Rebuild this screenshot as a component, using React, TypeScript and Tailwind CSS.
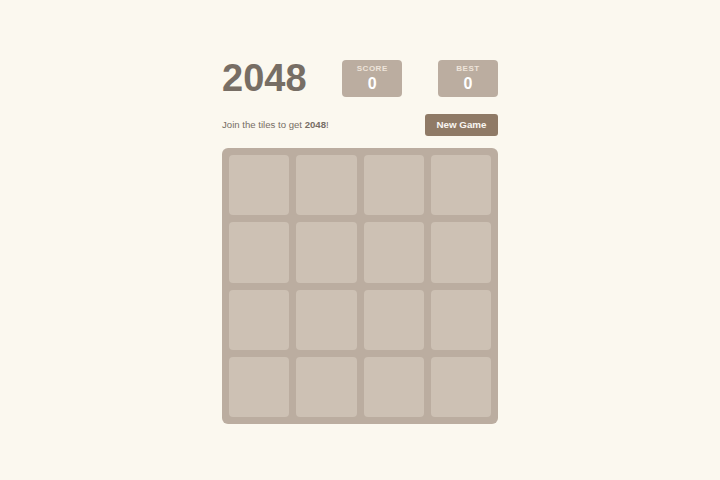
const SIZE = 4;

function ScoreBox({ label, value }: { label: string; value: number }) {
  return (
    <div className="flex h-[37px] w-[60px] flex-col items-center justify-center rounded-[4px] bg-[#bbada0]">
      <span className="text-[8px] font-bold uppercase leading-none tracking-[0.5px] text-[#eee4da]">
        {label}
      </span>
      <span className="mt-[3px] text-[16px] font-bold leading-none text-white">
        {value}
      </span>
    </div>
  );
}

export default function App() {
  const cells = Array.from({ length: SIZE * SIZE }, (_, i) => i);

  return (
    <div
      className="flex min-h-screen justify-center bg-[#fbf8ef] pt-[59px]"
      style={{ fontFamily: '"Liberation Sans", Arial, sans-serif' }}
    >
      <div className="w-[276px]">
        <div className="flex items-center justify-between">
          <h1 className="text-[38px] font-bold leading-none text-[#776e65]">2048</h1>
          <ScoreBox label="Score" value={0} />
          <ScoreBox label="Best" value={0} />
        </div>

        <div className="mt-[17px] flex items-center justify-between">
          <p className="text-[9.6px] text-[#776e65]">
            Join the tiles to get <b>2048</b>!
          </p>
          <button
            type="button"
            className="h-[22px] w-[73px] rounded-[3px] bg-[#8f7a66] text-[9.8px] font-bold text-[#f9f6f2]"
          >
            New Game
          </button>
        </div>

        <div className="mt-[12px] grid grid-cols-4 gap-[7px] rounded-[6px] bg-[#bbada0] p-[7px]">
          {cells.map((i) => (
            <div key={i} className="aspect-square rounded-[4px] bg-[#cdc1b4]" />
          ))}
        </div>
      </div>
    </div>
  );
}
